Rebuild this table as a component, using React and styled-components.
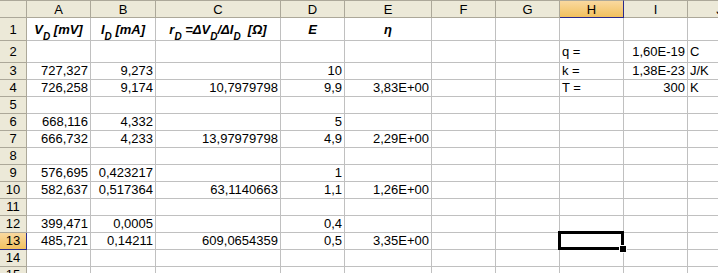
import React from 'react'
import styled, { createGlobalStyle } from 'styled-components'

const GlobalStyle = createGlobalStyle`
  html, body {
    margin: 0;
    padding: 0;
    background: #fff;
    overflow: hidden;
  }
  body {
    font-family: 'Liberation Sans', Arial, sans-serif;
  }
`

const COLS = ['A', 'B', 'C', 'D', 'E', 'F', 'G', 'H', 'I', 'J']
const WIDTHS = [64, 65, 125, 64, 87, 64, 64, 64, 64, 64]
const ROW_COUNT = 15
const ACTIVE = { col: 'H', row: 13 }

const HEAD_BG = '#ECE9D8'
const HEAD_LINE = '#ACA899'
const GRID = '#C0C0C0'
const NAVY = '#2A2A8C'

const Sheet = styled.div`
  display: grid;
  grid-template-columns: 27px ${WIDTHS.map(w => w + 'px').join(' ')};
  grid-template-rows: 18px 23px 22px repeat(${ROW_COUNT - 2}, 17px);
  width: 718px;
  height: 273px;
  overflow: hidden;
  font-size: 13px;
  color: #000;
`

const Corner = styled.div`
  box-sizing: border-box;
  background: ${HEAD_BG};
  border-top: 1px solid ${HEAD_LINE};
  border-right: 1px solid ${HEAD_LINE};
  border-bottom: 1px solid ${HEAD_LINE};
`

const ColHeader = styled.div`
  box-sizing: border-box;
  display: flex;
  align-items: center;
  justify-content: center;
  line-height: 15px;
  background: ${p => p.$active ? 'linear-gradient(#F9D99F, #F1C15F)' : HEAD_BG};
  border-top: 1px solid ${HEAD_LINE};
  border-right: 1px solid ${p => p.$active ? NAVY : HEAD_LINE};
  border-bottom: 1px solid ${p => p.$active ? NAVY : HEAD_LINE};
`

const RowHeader = styled.div`
  box-sizing: border-box;
  display: flex;
  align-items: flex-end;
  justify-content: center;
  line-height: 15px;
  padding-bottom: ${p => p.$tall ? 3 : 1}px;
  background: ${p => p.$active ? 'linear-gradient(#F9D99F, #F1C15F)' : HEAD_BG};
  border-right: 1px solid ${p => p.$active ? NAVY : HEAD_LINE};
  border-bottom: 1px solid ${p => p.$active ? NAVY : HEAD_LINE};
`

const Cell = styled.div`
  box-sizing: border-box;
  position: relative;
  display: flex;
  align-items: flex-end;
  justify-content: ${p => p.$align === 'right' ? 'flex-end' : p.$align === 'center' ? 'center' : 'flex-start'};
  padding: 0 2px ${p => p.$tall ? 3 : 1}px 2px;
  line-height: 15px;
  white-space: pre;
  border-right: 1px solid ${GRID};
  border-bottom: 1px solid ${GRID};
  font-weight: ${p => p.$title ? 'bold' : 'normal'};
  font-style: ${p => p.$title ? 'italic' : 'normal'};
`

const Sub = styled.sub`
  font-size: 10px;
  vertical-align: -3px;
  line-height: 0;
`

const ActiveFrame = styled.div`
  position: absolute;
  left: -2px;
  top: -2px;
  right: -1px;
  bottom: -1px;
  border: 3px solid #000;
  z-index: 2;
`

const FillHandle = styled.div`
  position: absolute;
  left: 59px;
  top: 12px;
  width: 6px;
  height: 6px;
  background: #000;
  border: 1px solid #fff;
  z-index: 3;
`

const TITLES = {
  A: <>V<Sub>D</Sub> [mV]</>,
  B: <>I<Sub>D</Sub> [mA]</>,
  C: <>r<Sub>D</Sub> =ΔV<Sub>D</Sub>/ΔI<Sub>D</Sub>  [Ω]</>,
  D: 'E',
  E: 'η'
}

const DATA = {
  2: { H: 'q =', I: '1,60E-19', J: 'C' },
  3: { A: '727,327', B: '9,273', D: '10', H: 'k =', I: '1,38E-23', J: 'J/K' },
  4: { A: '726,258', B: '9,174', C: '10,7979798', D: '9,9', E: '3,83E+00', H: 'T =', I: '300', J: 'K' },
  6: { A: '668,116', B: '4,332', D: '5' },
  7: { A: '666,732', B: '4,233', C: '13,97979798', D: '4,9', E: '2,29E+00' },
  9: { A: '576,695', B: '0,423217', D: '1' },
  10: { A: '582,637', B: '0,517364', C: '63,1140663', D: '1,1', E: '1,26E+00' },
  12: { A: '399,471', B: '0,0005', D: '0,4' },
  13: { A: '485,721', B: '0,14211', C: '609,0654359', D: '0,5', E: '3,35E+00' }
}

const isNumber = v => /^[\d,E+-]+$/.test(v)

const App = () => {
  const rows = Array.from({ length: ROW_COUNT }, (_, i) => i + 1)

  return (
    <>
      <GlobalStyle />
      <Sheet>
        <Corner />
        {COLS.map(c => (
          <ColHeader key={c} $active={c === ACTIVE.col}>{c}</ColHeader>
        ))}
        {rows.map(r => (
          <React.Fragment key={r}>
            <RowHeader $active={r === ACTIVE.row} $tall={r <= 2}>{r}</RowHeader>
            {COLS.map(c => {
              const active = r === ACTIVE.row && c === ACTIVE.col
              if (r === 1) {
                return (
                  <Cell key={c} $align='center' $title $tall>{TITLES[c] || ''}</Cell>
                )
              }
              const v = (DATA[r] && DATA[r][c]) || ''
              return (
                <Cell key={c} $align={isNumber(v) ? 'right' : 'left'} $tall={r === 2}>
                  {v}
                  {active && <ActiveFrame />}
                  {active && <FillHandle />}
                </Cell>
              )
            })}
          </React.Fragment>
        ))}
      </Sheet>
    </>
  )
}

export default App
